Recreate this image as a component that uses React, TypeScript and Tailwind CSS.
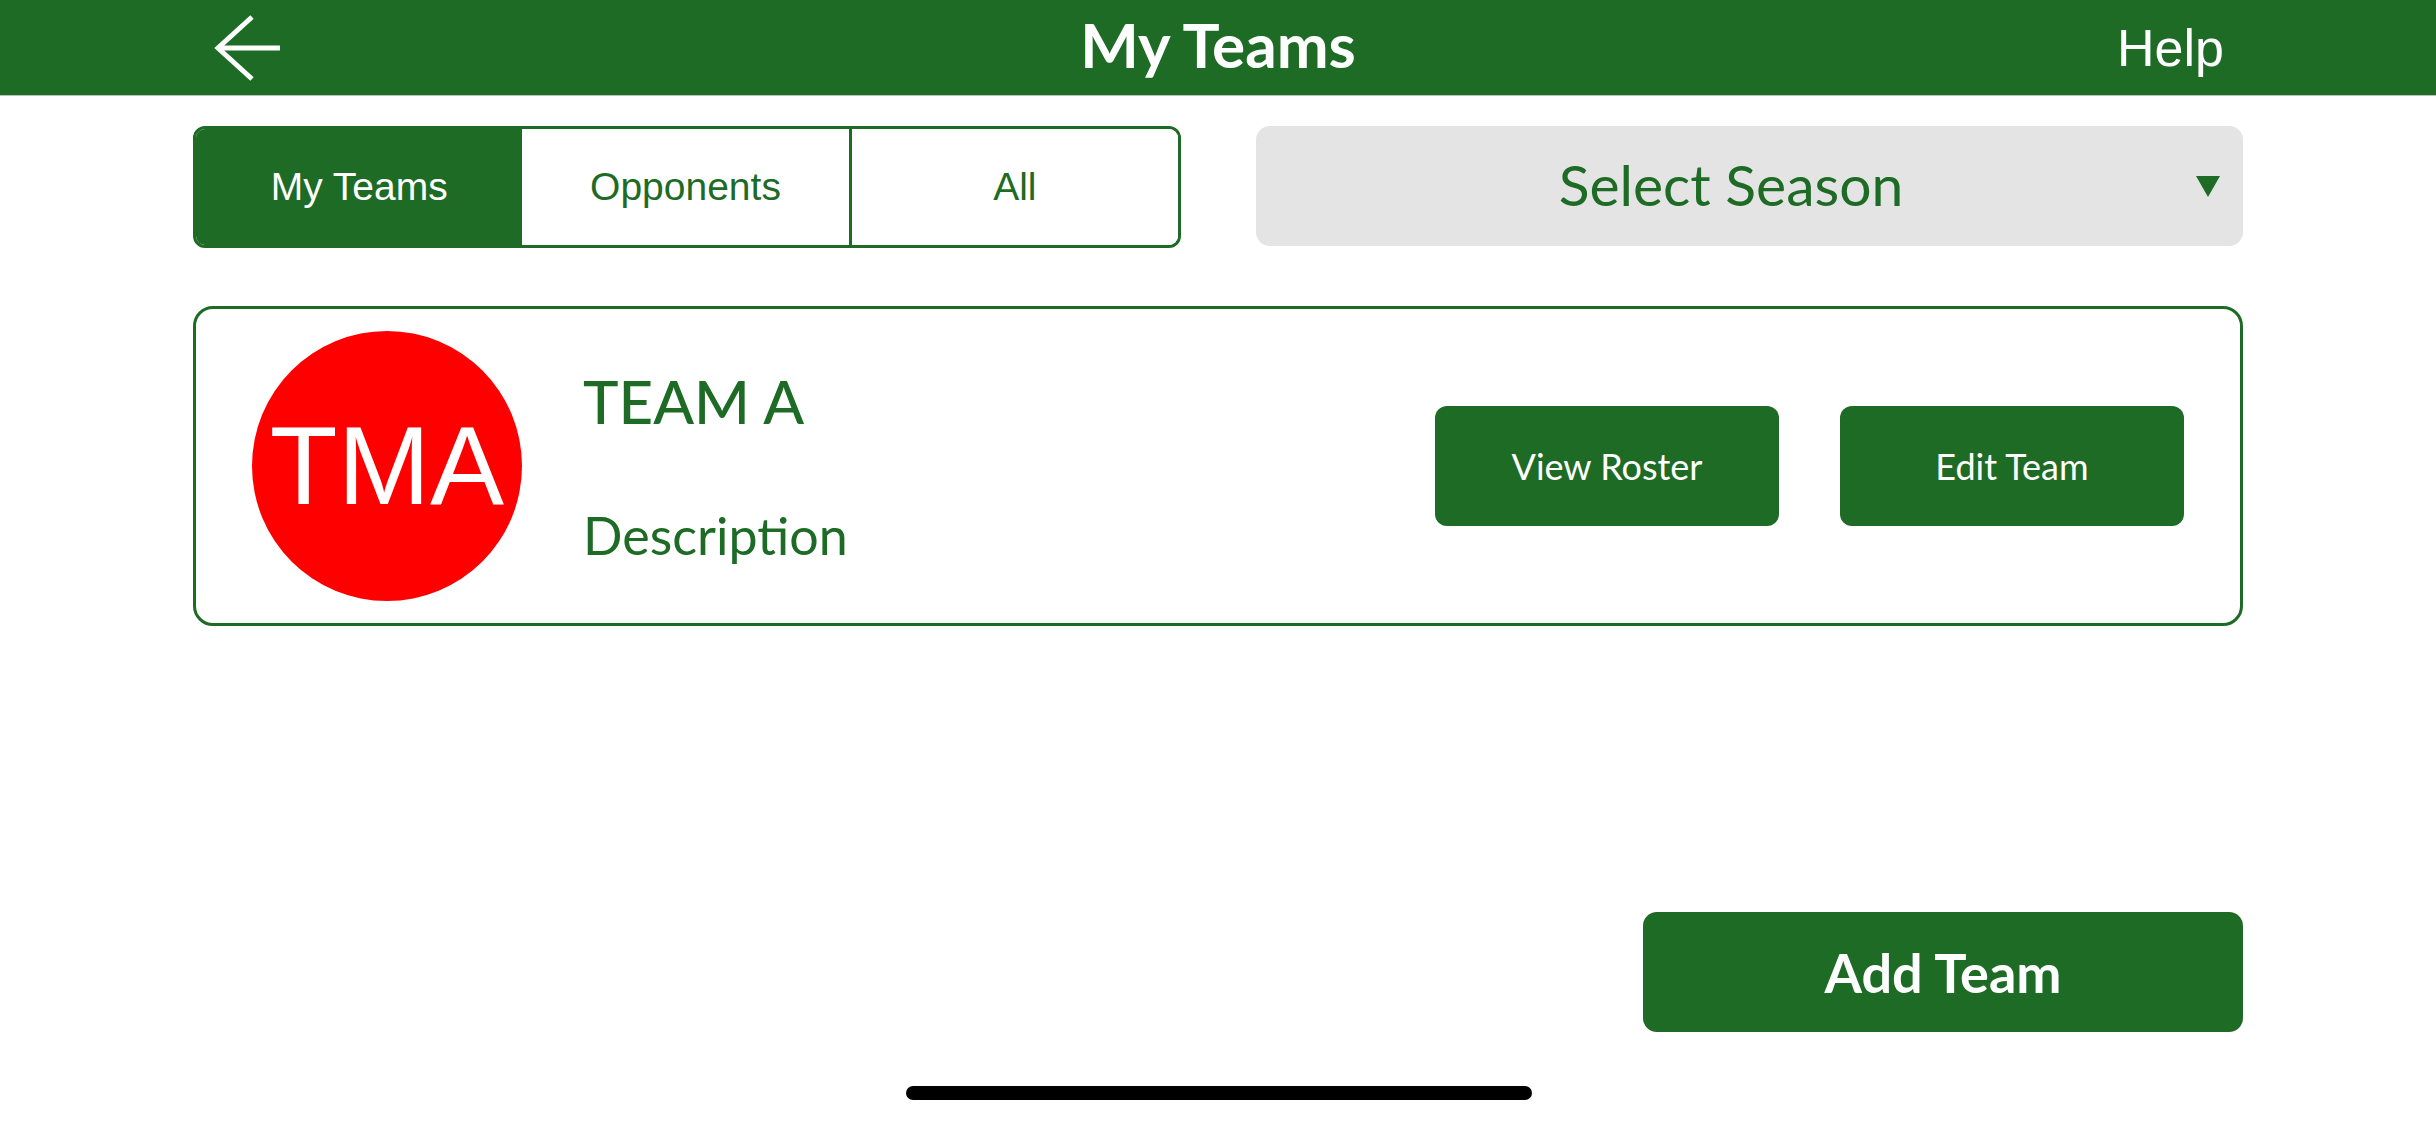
import React from "react";

const GREEN = "#1e6b25";

export default function App() {
  return (
    <div className="relative w-[2436px] h-[1125px] bg-white flex flex-col overflow-hidden">
      {/* Header */}
      <div className="h-[96px] shrink-0 bg-[#1e6b25] border-b border-[#b9c4ba] grid grid-cols-[1fr_auto_1fr] items-center px-[212px]">
        <div className="flex items-center">
          <svg width="66" height="66" viewBox="0 0 66 66" className="ml-[2px]">
            <polyline points="38,2 4,33 38,64" fill="none" stroke="white" strokeWidth="5" />
            <line x1="5" y1="33" x2="66" y2="33" stroke="white" strokeWidth="5" />
          </svg>
        </div>
        <div className="text-white text-[62px] font-bold leading-none font-['Lato',sans-serif] mt-[-8px]">My Teams</div>
        <div className="flex justify-end">
          <span className="text-white text-[52px] leading-none font-['Liberation_Sans',Arial,sans-serif]">Help</span>
        </div>
      </div>

      {/* Controls */}
      <div className="flex gap-[75px] px-[193px] mt-[30px]">
        <div className="w-[988px] shrink-0 h-[122px] border-[3px] border-[#1e6b25] rounded-[12px] overflow-hidden flex font-['Liberation_Sans',Arial,sans-serif] text-[39px]">
          <div className="flex-1 bg-[#1e6b25] text-white flex items-center justify-center">My Teams</div>
          <div className="flex-1 bg-white text-[#1e6b25] flex items-center justify-center border-r-[3px] border-[#1e6b25]">Opponents</div>
          <div className="flex-1 bg-white text-[#1e6b25] flex items-center justify-center">All</div>
        </div>
        <div className="w-[987px] shrink-0 h-[120px] bg-[#e4e4e4] rounded-[14px] flex items-center pr-[23px]">
          <div className="flex-1 pl-[10px] text-center text-[#1e6b25] text-[57px] leading-none font-['Lato',sans-serif] mt-[-4px]">Select Season</div>
          <svg width="24" height="21" viewBox="0 0 24 21">
            <polygon points="0,0 24,0 12,21" fill={GREEN} />
          </svg>
        </div>
      </div>

      {/* Team card */}
      <div className="mx-[193px] mt-[58px] h-[320px] border-[3px] border-[#1e6b25] rounded-[20px] flex items-center pl-[56px] pr-[56px]">
        <div className="w-[270px] h-[270px] rounded-full bg-[#fe0000] flex items-center justify-center shrink-0">
          <span className="text-white text-[111px] leading-none font-['Liberation_Sans',Arial,sans-serif]">TMA</span>
        </div>
        <div className="ml-[61px] flex flex-col gap-[78px] text-[#1e6b25] font-['Lato',sans-serif]">
          <div className="text-[60px] leading-none font-medium">TEAM A</div>
          <div className="text-[52px] leading-none">Description</div>
        </div>
        <div className="ml-auto flex gap-[61px]">
          <button className="w-[344px] h-[120px] rounded-[12px] bg-[#1e6b25] text-white text-[36px] font-['Lato',sans-serif]">View Roster</button>
          <button className="w-[344px] h-[120px] rounded-[12px] bg-[#1e6b25] text-white text-[36px] font-['Lato',sans-serif]">Edit Team</button>
        </div>
      </div>

      {/* Add Team */}
      <div className="mt-auto mb-[93px] px-[193px] flex justify-end">
        <button className="w-[600px] h-[120px] rounded-[14px] bg-[#1e6b25] text-white text-[54px] font-bold font-['Lato',sans-serif]">Add Team</button>
      </div>

      {/* Home indicator */}
      <div className="absolute left-[906px] bottom-[25px] w-[626px] h-[14px] rounded-full bg-black" />
    </div>
  );
}
